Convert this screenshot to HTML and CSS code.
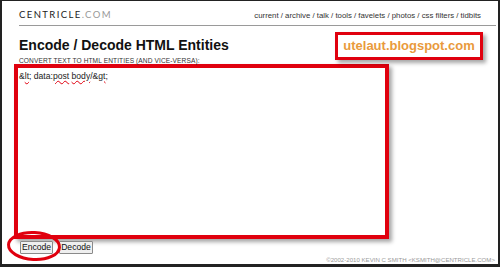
FILE: index.html
```html
<!DOCTYPE html>
<html lang="en">
<head>
<meta charset="UTF-8">
<meta name="viewport" content="width=device-width, initial-scale=1.0">
<title>Encode / Decode HTML Entities</title>
<link rel="stylesheet" href="styles.css">
</head>
<body>
  <div class="frame">
    <div class="header">
      <div class="brand">CENTRICLE<span class="brand-tld">.COM</span></div>
      <div class="nav">current / archive / talk / tools / favelets / photos / css filters / tidbits</div>
    </div>

    <h1 class="title">Encode / Decode HTML Entities</h1>
    <div class="blog-badge">utelaut.blogspot.com</div>

    <div class="field-label">CONVERT TEXT TO HTML ENTITIES (AND VICE-VERSA):</div>
    <div class="entry-box">&amp;<span class="typo">lt</span>; data:<span class="typo">post</span> <span class="typo">body</span>/&amp;<span class="typo">gt</span>;</div>

    <div class="buttons">
      <button class="btn">Encode</button>
      <button class="btn">Decode</button>
    </div>

    <svg class="circle-mark" width="58" height="34" viewBox="0 0 58 34">
      <ellipse cx="28" cy="16" rx="25.5" ry="13.5" fill="none" stroke="#e0000e" stroke-width="3" transform="rotate(3 28 16)"/>
    </svg>

    <div class="footer">&copy;2002-2010 KEVIN C SMITH &lt;KSMITH@CENTRICLE.COM&gt;</div>
  </div>
</body>
</html>
```

FILE: styles.css
```css
body {
  margin: 0;
  padding: 0;
  background-color: #fff;
  font-family: "Liberation Sans", Arial, sans-serif;
}
.frame {
  position: relative;
  width: 500px;
  height: 267px;
  box-sizing: border-box;
  border-style: solid;
  border-color: #222;
  border-width: 1px 2px 3px 2px;
  padding-left: 17px;
  overflow: hidden;
}
.header {
  display: flex;
  justify-content: space-between;
  align-items: baseline;
  margin-right: 2px;
  padding-top: 9px;
  padding-bottom: 7px;
  height: 8px;
  line-height: 9px;
  border-bottom: 1px solid #9a9a9a;
}
.brand {
  font-family: Lato, "Open Sans", sans-serif;
  font-size: 9.5px;
  letter-spacing: 1.4px;
  color: #222;
}
.brand-tld {
  color: #999;
}
.nav {
  font-size: 7.8px;
  color: #333;
  padding-right: 15px;
}
.title {
  margin: 11px 0 0 0;
  font-size: 14px;
  line-height: 16px;
  font-weight: bold;
  color: #111;
}
.blog-badge {
  position: absolute;
  left: 333px;
  top: 31px;
  width: 142px;
  height: 22px;
  border: 3px solid #e0000e;
  box-shadow: 3px 3px 4px rgba(0, 0, 0, 0.35);
  font-size: 13px;
  font-weight: bold;
  line-height: 22px;
  text-align: center;
  color: #e99a3c;
}
.field-label {
  margin-top: 5px;
  font-size: 6.6px;
  letter-spacing: 0.1px;
  line-height: 6px;
  color: #333;
}
.entry-box {
  margin-left: -5px;
  width: 366px;
  height: 164px;
  border: 4px solid #e0000e;
  box-shadow: 3px 3px 4px rgba(0, 0, 0, 0.35);
  padding: 3px 0 0 1px;
  font-size: 8.6px;
  line-height: 10px;
  color: #222;
}
.typo {
  text-decoration: underline wavy #e0000e;
  text-decoration-thickness: 1px;
  text-underline-offset: 1px;
}
.buttons {
  display: flex;
  gap: 6px;
  margin-top: 2px;
  margin-left: 1px;
}
.btn {
  height: 13px;
  padding: 0 1px;
  font-family: "Liberation Sans", Arial, sans-serif;
  font-size: 8.6px;
  line-height: 11px;
  color: #111;
  background-color: #efefef;
  border: 1px solid #8a8a8a;
  border-radius: 1px;
}
.circle-mark {
  position: absolute;
  left: 4px;
  top: 229px;
}
.footer {
  margin-top: 3px;
  padding-right: 3px;
  text-align: right;
  font-size: 6.1px;
  line-height: 6px;
  color: #9a9a9a;
}
```
